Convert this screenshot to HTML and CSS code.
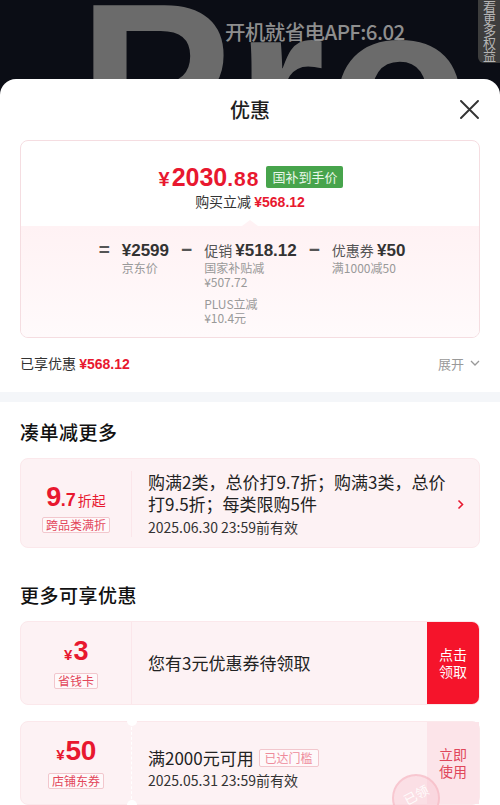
FILE: index.html
```html
<!DOCTYPE html>
<html lang="zh-CN">
<head>
<meta charset="utf-8">
<title>优惠</title>
<link rel="stylesheet" href="styles.css">
</head>
<body>
<div class="hero">
  <div class="hero-pro">Pro</div>
  <div class="hero-slogan">开机就省电APF:6.02</div>
  <div class="hero-tab"><span>查看更多权益</span></div>
</div>

<div class="sheet">
  <div class="sheet-head">
    <span></span>
    <h1 class="sheet-title">优惠</h1>
    <button class="close" aria-label="关闭">
      <svg width="19" height="19" viewBox="0 0 19 19"><path d="M1 1L18 18M18 1L1 18" stroke="#333" stroke-width="1.9" stroke-linecap="round"/></svg>
    </button>
  </div>

  <div class="summary">
    <div class="summary-top">
      <div class="price-row">
        <span class="price"><span class="p-yen">¥</span><span class="p-int">2030</span><span class="p-dec">.88</span></span>
        <span class="badge-green">国补到手价</span>
      </div>
      <div class="instant">购买立减 <b>¥568.12</b></div>
    </div>
    <div class="summary-body">
      <div class="bd">
        <div class="bd-sym">=</div>
        <div class="bd-col">
          <div class="bd-main"><b>¥2599</b></div>
          <div class="bd-sub">京东价</div>
        </div>
        <div class="bd-sym">−</div>
        <div class="bd-col">
          <div class="bd-main">促销 <b>¥518.12</b></div>
          <div class="bd-sub">国家补贴减<br>¥507.72</div>
          <div class="bd-sub bd-gap">PLUS立减<br>¥10.4元</div>
        </div>
        <div class="bd-sym">−</div>
        <div class="bd-col">
          <div class="bd-main">优惠券 <b>¥50</b></div>
          <div class="bd-sub">满1000减50</div>
        </div>
      </div>
    </div>
  </div>

  <div class="saved">
    <div class="saved-l">已享优惠 <b>¥568.12</b></div>
    <div class="saved-r">展开
      <svg width="10" height="6" viewBox="0 0 10 6"><path d="M1 1L5 5L9 1" fill="none" stroke="#999" stroke-width="1.3"/></svg>
    </div>
  </div>

  <div class="band"></div>

  <section class="sec">
    <h2 class="sec-title">凑单减更多</h2>
    <div class="deal">
      <div class="deal-left deal-left-top">
        <div class="amt"><span class="a-big">9</span><span class="a-mid">.7</span><span class="a-unit">折起</span></div>
        <span class="tag">跨品类满折</span>
      </div>
      <div class="deal-text">
        <p class="deal-desc">购满2类，总价打9.7折；购满3类，总价打9.5折；每类限购5件</p>
        <p class="deal-date">2025.06.30 23:59前有效</p>
      </div>
      <div class="deal-arrow">
        <svg width="7" height="11" viewBox="0 0 7 11"><path d="M1.5 1.5L5.5 5.5L1.5 9.5" fill="none" stroke="#e8182f" stroke-width="1.6"/></svg>
      </div>
    </div>

    <h2 class="sec-title sec-title-2">更多可享优惠</h2>
    <div class="deal deal-coupon">
      <div class="deal-left">
        <div class="amt"><span class="a-yen">¥</span><span class="a-big">3</span></div>
        <span class="tag">省钱卡</span>
      </div>
      <div class="deal-text">
        <p class="deal-desc">您有3元优惠券待领取</p>
      </div>
      <button class="deal-btn">点击<br>领取</button>
    </div>

    <div class="deal deal-coupon deal-ticket">
      <div class="deal-left">
        <div class="amt"><span class="a-yen">¥</span><span class="a-big a-big-50">50</span></div>
        <span class="tag">店铺东券</span>
      </div>
      <div class="deal-text">
        <p class="deal-desc">满2000元可用 <span class="tag tag-light">已达门槛</span></p>
        <p class="deal-date">2025.05.31 23:59前有效</p>
      </div>
      <button class="deal-btn deal-btn-soft">立即<br>使用</button>
      <div class="stamp"><span>已领</span></div>
    </div>
  </section>
</div>
</body>
</html>
```

FILE: styles.css
```css
* { box-sizing: border-box; }
html, body {
  margin: 0;
  padding: 0;
}
body {
  width: 500px;
  height: 805px;
  overflow: hidden;
  background: #0b0d15;
  font-family: "Noto Sans CJK SC", "Noto Sans", sans-serif;
  color: #222;
}
p, h1, h2 { margin: 0; }
button {
  font: inherit;
  border: 0;
  padding: 0;
  background: none;
}

/* hero */
.hero {
  position: relative;
  height: 79px;
  overflow: hidden;
  background: #0b0d15;
}
.hero-pro {
  position: absolute;
  left: 78px;
  top: -30px;
  font-family: "Liberation Sans", Arial, sans-serif;
  font-weight: 700;
  font-size: 230px;
  line-height: 1;
  color: #6b6b6b;
  letter-spacing: 4px;
}
.hero-slogan {
  position: absolute;
  left: 225px;
  top: 17px;
  font-size: 20.5px;
  font-weight: 500;
  line-height: 28px;
  color: #8e8e8e;
  letter-spacing: -0.6px;
}
.hero-tab {
  position: absolute;
  right: 0;
  top: 0;
  width: 22px;
  height: 63px;
  background: #3d3d3d;
  border-radius: 0 0 0 6px;
  overflow: hidden;
  display: flex;
  flex-direction: column;
  justify-content: flex-end;
  align-items: center;
  padding-bottom: 2px;
}
.hero-tab span {
  writing-mode: vertical-rl;
  white-space: nowrap;
  font-size: 13px;
  line-height: 16px;
  letter-spacing: -1px;
  color: #b5b5b5;
  flex-shrink: 0;
}

/* sheet */
.sheet {
  height: 726px;
  background: #fff;
  border-radius: 16px 16px 0 0;
  overflow: hidden;
}
.sheet-head {
  height: 61px;
  display: grid;
  grid-template-columns: 1fr auto 1fr;
  align-items: center;
}
.sheet-title {
  font-size: 20px;
  font-weight: 500;
  line-height: 28px;
  color: #1e1e1e;
}
.close {
  justify-self: end;
  margin-right: 21px;
  width: 19px;
  height: 19px;
  display: flex;
}

/* summary card */
.summary {
  margin: 0 20px;
  border: 1px solid #f5dde1;
  border-radius: 8px;
  overflow: hidden;
}
.summary-top {
  padding: 21px 0 15px;
  display: flex;
  flex-direction: column;
  align-items: center;
}
.price-row {
  height: 30px;
  display: flex;
  align-items: center;
  gap: 7px;
  padding-left: 2px;
}
.price {
  display: flex;
  align-items: baseline;
  font-family: "Liberation Sans", Arial, sans-serif;
  font-weight: 700;
  color: #e8182f;
  line-height: 1;
}
.p-yen { font-size: 20px; margin-right: 2px; }
.p-int { font-size: 25px; }
.p-dec { font-size: 21px; letter-spacing: 1px; }
.badge-green {
  height: 22px;
  padding: 0 6px;
  background: #47a44c;
  color: #e9f7e9;
  font-size: 13px;
  line-height: 22px;
  border-radius: 2px;
}
.instant {
  height: 19px;
  font-size: 14px;
  line-height: 19px;
  color: #333;
}
.instant b {
  font-family: "Liberation Sans", Arial, sans-serif;
  font-weight: 700;
  color: #e8182f;
}
.summary-body {
  position: relative;
  background: linear-gradient(#fff2f4, #fffafb);
  padding: 14px 0 12px;
}
.summary-body::before {
  content: "";
  position: absolute;
  top: -6px;
  left: 50%;
  margin-left: -8px;
  border-left: 8px solid transparent;
  border-right: 8px solid transparent;
  border-bottom: 6px solid #fff2f4;
}
.bd {
  display: flex;
  justify-content: center;
  gap: 12px;
  padding-left: 4px;
}
.bd-sym {
  font-family: "Liberation Sans", Arial, sans-serif;
  font-size: 19px;
  font-weight: 700;
  line-height: 20px;
  color: #555;
}
.bd-col {
  display: flex;
  flex-direction: column;
}
.bd-main {
  font-size: 14px;
  line-height: 20px;
  color: #555;
  white-space: nowrap;
}
.bd-main b {
  font-family: "Liberation Sans", Arial, sans-serif;
  font-size: 17px;
  font-weight: 700;
  color: #333;
}
.bd-sub {
  font-size: 12px;
  line-height: 14px;
  color: #999;
}
.bd-gap { margin-top: 8px; }

/* saved row */
.saved {
  height: 50px;
  margin-bottom: 4px;
  padding: 0 20px;
  display: flex;
  align-items: center;
  justify-content: space-between;
}
.saved-l {
  font-size: 14px;
  color: #333;
}
.saved-l b {
  font-family: "Liberation Sans", Arial, sans-serif;
  font-weight: 700;
  color: #e8182f;
}
.saved-r {
  display: flex;
  align-items: center;
  gap: 6px;
  font-size: 13px;
  color: #999;
}
.band {
  height: 10px;
  background: #f4f6f9;
}

/* sections */
.sec {
  padding: 0 20px;
}
.sec-title {
  margin-top: 17px;
  font-size: 19px;
  font-weight: 500;
  line-height: 26px;
  color: #111;
  letter-spacing: 0.5px;
}
.sec-title-2 { margin-top: 34px; }

.deal {
  position: relative;
  margin-top: 13px;
  display: flex;
  background: #fdf2f4;
  border: 1px solid #fbe8eb;
  border-radius: 8px;
  padding: 12px 0 10px;
}
.deal-left {
  width: 111px;
  flex-shrink: 0;
  display: flex;
  flex-direction: column;
  align-items: center;
  justify-content: center;
  border-right: 1px solid #fbe6ea;
}
.deal-left-top {
  justify-content: flex-start;
  padding-top: 14px;
}
.amt {
  display: flex;
  align-items: baseline;
  height: 24px;
  line-height: 24px;
  font-family: "Liberation Sans", Arial, sans-serif;
  font-weight: 700;
  color: #e8182f;
}
.a-big { font-size: 27px; letter-spacing: -0.5px; }
.a-big-50 { font-size: 28px; }
.a-mid { font-size: 18px; }
.a-yen { font-size: 15px; margin-right: 1px; }
.a-unit {
  font-family: "Noto Sans CJK SC", sans-serif;
  font-weight: 400;
  font-size: 14px;
  margin-left: 2px;
}
.tag {
  display: inline-block;
  margin-top: 8px;
  padding: 0 3px;
  height: 16px;
  line-height: 14px;
  font-size: 12px;
  color: #e3475b;
  background: rgba(255, 255, 255, 0.55);
  border: 1px solid #f2c7cd;
  border-radius: 2px;
  white-space: nowrap;
}
.tag-light {
  margin-top: 0;
  height: 18px;
  line-height: 16px;
  padding: 0 5px;
  color: #ee8b9b;
  vertical-align: 2px;
  margin-left: 1px;
}
.deal-text {
  flex: 1;
  padding-left: 16px;
  display: flex;
  flex-direction: column;
  justify-content: center;
}
.deal-desc {
  font-size: 17px;
  line-height: 22px;
  color: #222;
}
.deal-date {
  margin-top: 2px;
  font-size: 14px;
  line-height: 20px;
  color: #333;
}
.deal-arrow {
  width: 32px;
  flex-shrink: 0;
  display: flex;
  align-items: center;
  justify-content: center;
  padding-top: 1px;
  padding-right: 6px;
}

.deal-coupon {
  height: 84px;
  padding: 0;
  overflow: hidden;
}
.deal-coupon .deal-left { padding-top: 2px; }
.deal-coupon .tag { margin-top: 10px; }
.deal-btn {
  width: 52px;
  flex-shrink: 0;
  background: #f5142b;
  color: #fff;
  font-size: 14px;
  line-height: 17px;
  display: flex;
  align-items: center;
  justify-content: center;
  text-align: center;
}
.deal-btn-soft {
  background: #fce4e9;
  color: #e0475b;
}

.deal-ticket {
  margin-top: 16px;
  overflow: visible;
}
.deal-ticket .deal-left {
  border-right: 1px dashed #ffffff;
}
.deal-ticket .deal-text { padding-top: 2px; }
.deal-ticket .deal-date { margin-top: 1px; }
.deal-ticket::before,
.deal-ticket::after {
  content: "";
  position: absolute;
  left: 106px;
  width: 10px;
  height: 10px;
  border-radius: 50%;
  background: #fff;
}
.deal-ticket::before { top: -6px; }
.deal-ticket::after { bottom: -6px; }
.stamp {
  position: absolute;
  left: 371px;
  top: 52px;
  width: 48px;
  height: 48px;
  border-radius: 50%;
  border: 2px solid rgba(244, 170, 182, 0.45);
  background: rgba(249, 200, 210, 0.45);
  display: flex;
  align-items: center;
  justify-content: center;
}
.stamp span {
  transform: rotate(-28deg);
  font-size: 13px;
  color: rgba(255, 255, 255, 0.9);
  margin-top: -8px;
}
```
